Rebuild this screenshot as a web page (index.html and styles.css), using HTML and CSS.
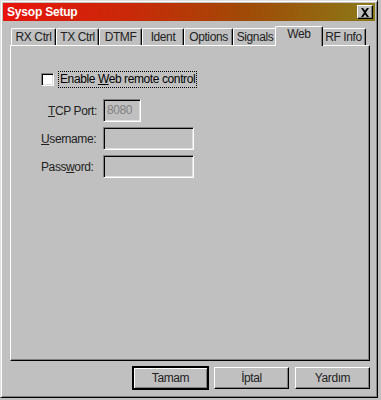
FILE: index.html
```html
<!DOCTYPE html>
<html lang="tr">
<head>
  <meta charset="UTF-8">
  <title>Sysop Setup</title>
  <link rel="stylesheet" href="styles.css">
</head>
<body>
  <div class="window">
    <div class="titlebar">
      <span class="title">Sysop Setup</span>
      <div class="close">
        <svg width="10" height="9" viewBox="0 0 10 9">
          <path d="M1 0h2l2 2.5L7 0h2L6 4.5 9 9H7L5 6.5 3 9H1l3-4.5z" fill="#000"/>
        </svg>
      </div>
    </div>

    <div class="tabs">
      <div class="tab">RX Ctrl</div>
      <div class="tab">TX Ctrl</div>
      <div class="tab">DTMF</div>
      <div class="tab">Ident</div>
      <div class="tab">Options</div>
      <div class="tab">Signals</div>
      <div class="tab active">Web</div>
      <div class="tab">RF Info</div>
    </div>

    <div class="panel">
      <div class="check-row">
        <span class="checkbox"></span>
        <span class="focus">Enable <u>W</u>eb remote control</span>
      </div>

      <div class="fields">
        <label class="lbl indent"><u>T</u>CP Port:</label>
        <div class="input short">8080</div>
        <label class="lbl"><u>U</u>sername:</label>
        <div class="input"></div>
        <label class="lbl">Pass<u>w</u>ord:</label>
        <div class="input"></div>
      </div>
    </div>

    <div class="buttons">
      <button class="btn default">Tamam</button>
      <button class="btn">İptal</button>
      <button class="btn">Yardım</button>
    </div>
  </div>
</body>
</html>
```

FILE: styles.css
```css
body, html {
  margin: 0;
  padding: 0;
  background: #c0c0c0;
  font-family: 'Liberation Sans', Arial, sans-serif;
  font-size: 12px;
  letter-spacing: -0.4px;
  color: #000;
}

.window {
  width: 378px;
  height: 398px;
  box-sizing: border-box;
  background: #c0c0c0;
  border-left: 1px solid #dfdfdf;
  border-top: 1px solid #dfdfdf;
  border-right: 1px solid #000;
  border-bottom: 1px solid #000;
  box-shadow: inset 1px 1px 0 #fff, inset -1px -1px 0 #808080;
  padding: 2px;
  display: flex;
  flex-direction: column;
}

.titlebar {
  height: 18px;
  display: flex;
  align-items: center;
  justify-content: space-between;
  padding: 0 2px 0 4px;
  background: linear-gradient(to right, #e8140c 0%, #c82a08 35%, #a04a06 65%, #8a7a18 100%);
}

.title {
  color: #fff;
  font-weight: bold;
  font-size: 12px;
  letter-spacing: -0.2px;
}

.close {
  width: 16px;
  height: 14px;
  box-sizing: border-box;
  background: #c0c0c0;
  border-left: 1px solid #fff;
  border-top: 1px solid #fff;
  border-right: 1px solid #000;
  border-bottom: 1px solid #000;
  box-shadow: inset -1px -1px 0 #808080;
  display: flex;
  align-items: center;
  justify-content: center;
}

.tabs {
  display: flex;
  align-items: flex-end;
  margin-top: 5px;
  padding-left: 8px;
  height: 19px;
  position: relative;
  z-index: 1;
}

.tab {
  flex: 0 0 auto;
  height: 17px;
  box-sizing: border-box;
  border-left: 1px solid #fff;
  border-top: 1px solid #fff;
  border-right: 1px solid #000;
  border-top-left-radius: 2px;
  border-top-right-radius: 2px;
  box-shadow: inset -1px 0 0 #808080;
  line-height: 16px;
  text-align: center;
  white-space: nowrap;
  color: #222;
}

.tab:nth-child(1) { width: 45px; }
.tab:nth-child(2) { width: 43px; }
.tab:nth-child(3) { width: 43px; }
.tab:nth-child(4) { width: 42px; }
.tab:nth-child(5) { width: 49px; }
.tab:nth-child(6) { width: 44px; }
.tab:nth-child(7) { width: 48px; }
.tab:nth-child(8) { width: 45px; }

.tab.active {
  height: 20px;
  margin: 0 -2px;
  background: #c0c0c0;
  position: relative;
  top: 1px;
  line-height: 15px;
  padding-bottom: 3px;
}

.panel {
  margin: 0 5px 0 7px;
  height: 316px;
  box-sizing: border-box;
  border-left: 1px solid #fff;
  border-top: 1px solid #fff;
  border-right: 1px solid #000;
  border-bottom: 1px solid #000;
  box-shadow: inset -1px -1px 0 #808080;
  padding: 26px 0 0 30px;
}

.check-row {
  display: flex;
  align-items: center;
  gap: 5px;
}

.checkbox {
  width: 13px;
  height: 13px;
  box-sizing: border-box;
  background: #fff;
  border-left: 1px solid #808080;
  border-top: 1px solid #808080;
  border-right: 1px solid #fff;
  border-bottom: 1px solid #fff;
  box-shadow: inset 1px 1px 0 #000, inset -1px -1px 0 #dfdfdf;
}

.focus {
  outline: 1px dotted #000;
  padding: 0 1px;
  line-height: 15px;
}

.fields {
  display: grid;
  grid-template-columns: 62px auto;
  row-gap: 5px;
  margin-top: 12px;
  align-items: center;
  justify-items: start;
}

.lbl {
  color: #222;
}

.lbl.indent {
  padding-left: 7px;
}

.input {
  width: 91px;
  height: 23px;
  box-sizing: border-box;
  background: #c0c0c0;
  border-left: 1px solid #808080;
  border-top: 1px solid #808080;
  border-right: 1px solid #fff;
  border-bottom: 1px solid #fff;
  box-shadow: inset 1px 1px 0 #000, inset -1px -1px 0 #dfdfdf;
  color: #808080;
  padding: 3px 3px;
}

.input.short {
  width: 38px;
}

.buttons {
  display: flex;
  justify-content: flex-end;
  gap: 6px;
  margin-top: 6px;
  padding-right: 5px;
}

.btn {
  width: 75px;
  height: 22px;
  box-sizing: border-box;
  background: #c0c0c0;
  border-left: 1px solid #fff;
  border-top: 1px solid #fff;
  border-right: 1px solid #000;
  border-bottom: 1px solid #000;
  box-shadow: inset -1px -1px 0 #808080;
  font-family: 'Liberation Sans', Arial, sans-serif;
  font-size: 12px;
  letter-spacing: -0.4px;
  color: #222;
  padding: 0;
}

.btn.default {
  outline: 1px solid #000;
  outline-offset: 0;
  border: 1px solid #000;
  box-shadow: inset 1px 1px 0 #fff, inset -1px -1px 0 #808080;
}
```
